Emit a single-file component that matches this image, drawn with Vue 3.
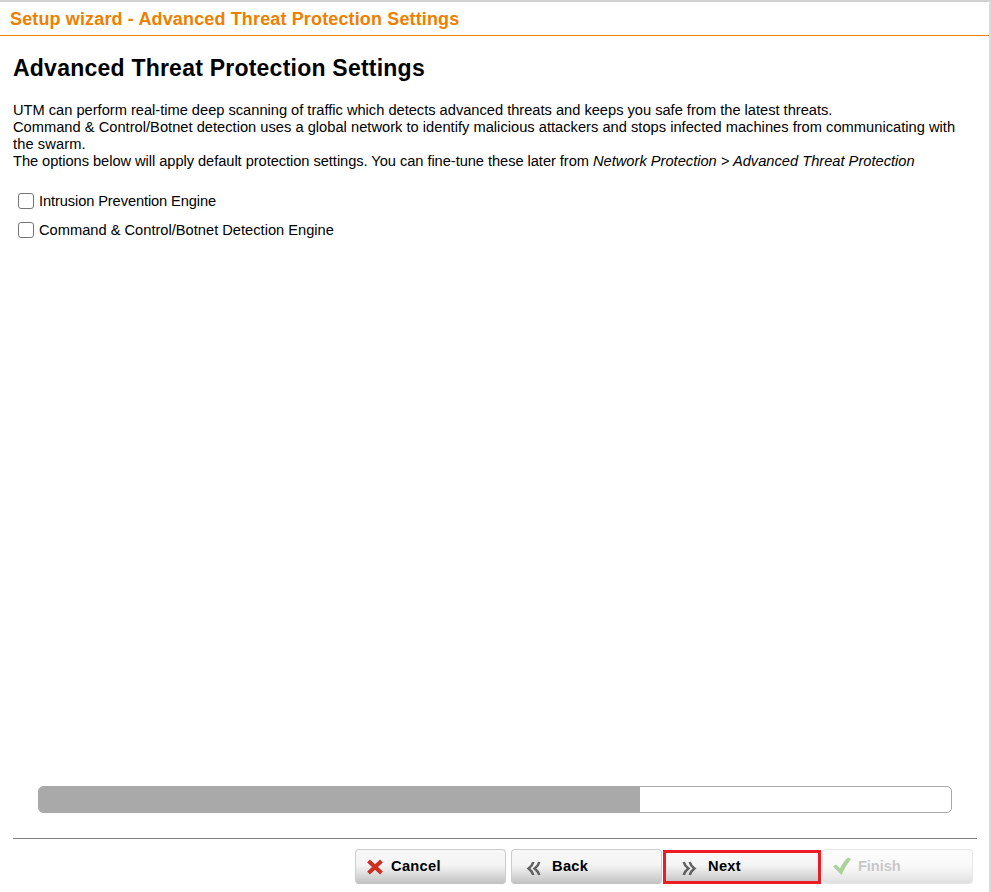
<script setup>
const progress = 65.9
const intro = [
  { id: 'l1', text: 'UTM can perform real-time deep scanning of traffic which detects advanced threats and keeps you safe from the latest threats.' },
  { id: 'l2', text: 'Command & Control/Botnet detection uses a global network to identify malicious attackers and stops infected machines from communicating with' },
  { id: 'l3', text: 'the swarm.' },
  { id: 'l4', text: 'The options below will apply default protection settings. You can fine-tune these later from ', em: 'Network Protection > Advanced Threat Protection' },
]
</script>

<template>
  <main class="wizard">
    <header class="bar"><span>Setup wizard - Advanced Threat Protection Settings</span></header>
    <section class="content">
      <h1><span>Advanced Threat Protection Settings</span></h1>
      <div class="intro">
        <div v-for="l in intro" :key="l.id"><span :class="l.id">{{ l.text }}<em v-if="l.em">{{ l.em }}</em></span></div>
      </div>
      <label class="option"><input type="checkbox"><span class="o1">Intrusion Prevention Engine</span></label>
      <label class="option"><input type="checkbox"><span class="o2">Command &amp; Control/Botnet Detection Engine</span></label>
    </section>
    <div class="progress"><div class="fill" :style="{ width: progress + '%' }"></div></div>
    <footer class="actions">
      <button class="btn cancel">
        <svg width="18" height="18" viewBox="0 0 18 18"><path d="M2.5 3 15.5 15M15.5 3 2.5 15" stroke="#cf2f22" stroke-width="4" /></svg>
        <span>Cancel</span>
      </button>
      <button class="btn back">
        <svg class="low" width="18" height="18" viewBox="0 0 18 18"><path d="M8.3 2 Q7.5 5.5 3.6 8.5 Q7.5 11.5 8.3 15M14.3 2 Q13.5 5.5 9.6 8.5 Q13.5 11.5 14.3 15" fill="none" stroke="#606060" stroke-width="2.5" /></svg>
        <span>Back</span>
      </button>
      <div class="highlight">
        <button class="btn next">
          <svg class="low" width="18" height="18" viewBox="0 0 18 18"><path d="M3.7 2 Q4.5 5.5 8.4 8.5 Q4.5 11.5 3.7 15M9.7 2 Q10.5 5.5 14.4 8.5 Q10.5 11.5 9.7 15" fill="none" stroke="#606060" stroke-width="2.5" /></svg>
          <span>Next</span>
        </button>
      </div>
      <button class="btn finish">
        <svg width="20" height="20" viewBox="0 0 20 20"><path d="M0 9.5 3 7.5 7 11.5C9.5 6.5 12 3 15 0.5L18 2C14.5 6.5 11.5 11.5 8.5 18Z" fill="#a9d29b" /></svg>
        <span>Finish</span>
      </button>
    </footer>
  </main>
</template>

<style>
body { margin: 0; background: #fff; overflow: hidden; }
</style>

<style scoped>
.wizard {
  box-sizing: border-box;
  width: 991px;
  height: 892px;
  border-top: 2px solid #d1d1d1;
  border-right: 2px solid #dcdcdc;
  display: flex;
  flex-direction: column;
  font-family: "Liberation Sans", Arial, sans-serif;
  color: #000;
  white-space: nowrap;
}
.bar {
  height: 33px;
  flex: none;
  border-bottom: 1px solid #ee8000;
  padding-left: 10px;
  font-size: 18px;
  font-weight: bold;
  line-height: 35px;
  letter-spacing: 0.14px;
  color: #ee8000;
}
.content { padding: 18px 0 0 13px; flex: 1; }
h1 { margin: 0; font-size: 23px; line-height: 28px; letter-spacing: 0.23px; }
.intro { margin-top: 20px; font-size: 14.67px; line-height: 17px; }
.l1 { letter-spacing: -0.012px; }
.l2 { letter-spacing: 0.014px; }
.l3 { letter-spacing: 0.1px; }
.l4 { letter-spacing: -0.054px; }
.l4 em { letter-spacing: 0; }
.option { display: flex; align-items: center; height: 29px; font-size: 14.67px; }
.o1 { letter-spacing: -0.11px; }
.intro + .option { margin-top: 16px; }
.option input {
  appearance: none;
  box-sizing: border-box;
  width: 16px;
  height: 16px;
  margin: 0 5px;
  border: 1px solid #767676;
  border-radius: 3px;
  background: #fff;
}
.progress {
  box-sizing: border-box;
  width: 914px;
  height: 27px;
  flex: none;
  margin: 0 0 25px 38px;
  border: 1px solid #a9a9a9;
  border-radius: 5px;
  overflow: hidden;
}
.fill { height: 100%; background: #a9a9a9; }
.actions {
  box-sizing: border-box;
  height: 54px;
  flex: none;
  margin: 0 12px 0 13px;
  border-top: 1px solid #808080;
  padding: 10px 4px 0 0;
  display: flex;
  justify-content: flex-end;
}
.btn {
  box-sizing: border-box;
  width: 151px;
  height: 35px;
  margin: 0 5px 0 0;
  border: 1px solid #ccc;
  border-bottom-color: #c2c2c2;
  border-radius: 4px;
  padding: 0 0 0 10px;
  display: flex;
  align-items: center;
  gap: 7px;
  background: linear-gradient(#f7f7f7 0%, #f5f5f5 45%, #e4e4e4 65%, #c3c3c3 100%);
  font: bold 14.67px "Liberation Sans", Arial, sans-serif;
  letter-spacing: 0.3px;
  color: #000;
}
.btn svg { flex: none; }
.btn svg.low { margin-top: 5px; }
.btn span { padding-bottom: 2px; }
.back { padding-left: 13px; gap: 9px; margin-right: 1px; }
.highlight {
  box-sizing: border-box;
  width: 158px;
  height: 34px;
  margin-top: 1px;
  border: 3px solid #ed1c24;
  margin-right: 1px;
}
.next {
  width: 152px;
  height: 28px;
  border: 0;
  border-radius: 0;
  padding-left: 14px;
  gap: 10px;
  background: linear-gradient(#f7f7f7 0%, #f5f5f5 42%, #e4e4e4 65%, #c9c9c9 100%);
}
.btn.next span { padding-bottom: 3px; }
.btn.next svg.low { margin-top: 4px; }
.finish { margin-right: 0; gap: 5px; border-color: #e6e6e6; color: #c8c8c8; letter-spacing: -0.1px; background: linear-gradient(#fcfcfc 0%, #fafafa 45%, #f0f0f0 70%, #e0e0e0 100%); }
</style>
